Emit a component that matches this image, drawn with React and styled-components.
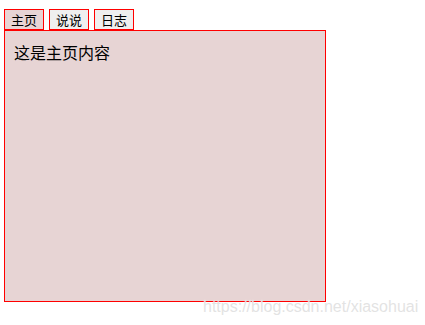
import React, { useState } from "react";
import styled, { createGlobalStyle } from "styled-components";

const Global = createGlobalStyle`
  html, body { margin: 0; padding: 0; background: #fff; }
  body { font-family: "Microsoft YaHei", "Noto Sans CJK SC", sans-serif; }
`;

const Page = styled.div`
  position: relative;
  width: 425px;
  height: 325px;
  padding: 9px 0 0 4px;
  box-sizing: border-box;
  overflow: hidden;
`;

const TabBar = styled.div`
  display: flex;
  gap: 5px;
  height: 21px;
`;

const Tab = styled.button`
  box-sizing: border-box;
  height: 21px;
  padding: 0 6px;
  margin: 0;
  border: 1px solid #ff0000;
  border-radius: 0;
  background: ${(p) => (p.$active ? "#e8d4d4" : "#efefef")};
  font-family: "Noto Sans CJK SC", sans-serif;
  font-size: 13px;
  line-height: 19px;
  color: #000;
  cursor: pointer;
`;

const Panel = styled.div`
  box-sizing: border-box;
  width: 322px;
  height: 272px;
  border: 1px solid #ff0000;
  background: #e7d4d4;
  padding: 9px 9px;
  font-family: "Noto Sans CJK SC", sans-serif;
  font-size: 16px;
  line-height: 24px;
  color: #000;
`;

const Watermark = styled.div`
  position: absolute;
  left: 203px;
  top: 297px;
  font-family: "Liberation Sans", Arial, sans-serif;
  font-size: 16px;
  line-height: 20px;
  color: rgba(220, 220, 220, 0.8);
  text-shadow: 0 0 1px rgba(255, 255, 255, 0.8);
  white-space: nowrap;
  pointer-events: none;
`;

const tabs = [
  { key: "home", label: "主页", content: "这是主页内容" },
  { key: "talk", label: "说说", content: "这是说说内容" },
  { key: "log", label: "日志", content: "这是日志内容" },
];

export default function App() {
  const [active, setActive] = useState("home");
  const current = tabs.find((t) => t.key === active);
  return (
    <Page>
      <Global />
      <TabBar>
        {tabs.map((t) => (
          <Tab key={t.key} $active={t.key === active} onClick={() => setActive(t.key)}>
            {t.label}
          </Tab>
        ))}
      </TabBar>
      <Panel>{current.content}</Panel>
      <Watermark>https://blog.csdn.net/xiasohuai</Watermark>
    </Page>
  );
}
